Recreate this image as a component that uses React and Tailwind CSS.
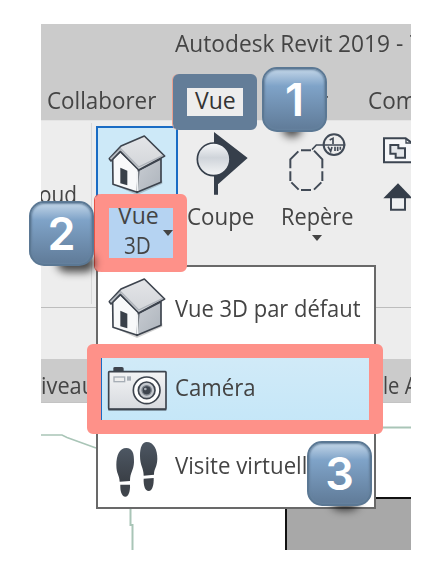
import { useLayoutEffect, useRef, useState } from "react";

// Condenses a label horizontally so that it takes exactly `w` pixels.
function Label({ children, w, className = "" }) {
  const ref = useRef(null);
  const [scale, setScale] = useState(1);
  useLayoutEffect(() => {
    setScale(w / ref.current.offsetWidth);
  }, [w]);
  return (
    <div className={`h-[30px] shrink-0 ${className}`} style={{ width: w }}>
      <span
        ref={ref}
        className="inline-block origin-left whitespace-nowrap text-[23px] leading-[30px]"
        style={{ transform: `scaleX(${scale})` }}
      >
        {children}
      </span>
    </div>
  );
}

function House() {
  return (
    <svg className="h-[62px] w-[60px] shrink-0" viewBox="230 50 180 186">
      <defs>
        <linearGradient id="roof" x1="0" y1="0" x2="0" y2="1">
          <stop offset="0" stopColor="#e4e5e8" />
          <stop offset="1" stopColor="#d2d5d9" />
        </linearGradient>
        <linearGradient id="side" x1="0" y1="0" x2="1" y2="1">
          <stop offset="0" stopColor="#c9cdd3" />
          <stop offset="1" stopColor="#adb4bc" />
        </linearGradient>
      </defs>
      <path d="M252 206 L320 236 L396 202 L396 192 L320 222Z" fill="#000" opacity=".18" />
      <path d="M247 128 L270 106 L325 158 L321 228 L248 204Z" fill="#f8f9fa" stroke="#3d444e" strokeWidth="5" strokeLinejoin="round" />
      <path d="M325 162 L392 127 V198 L320 228Z" fill="url(#side)" stroke="#3d444e" strokeWidth="5" strokeLinejoin="round" />
      <path d="M270 154 L291 163 V207 L270 201Z" fill="#394049" />
      <path d="M321 165 V224" stroke="#f0f2f4" strokeWidth="6" />
      <path d="M237 127 L272 89 L342 59 L403 119 L325 161 L270 105 L242 134Z" fill="url(#roof)" stroke="#3d444e" strokeWidth="5" strokeLinejoin="round" />
      <path d="M240 127 L271 97 L325 152 L398 117" fill="none" stroke="#adb2b9" strokeWidth="4" />
    </svg>
  );
}

function SectionIcon() {
  return (
    <svg className="h-[66px] w-[54px]" viewBox="45 30 162 198">
      <defs>
        <linearGradient id="ball" x1="0" y1="0" x2="0" y2="1">
          <stop offset="0" stopColor="#f7f8f9" />
          <stop offset=".45" stopColor="#cfd4da" />
          <stop offset="1" stopColor="#f4f5f6" />
        </linearGradient>
      </defs>
      <path d="M102 36 L203 114 L114 193 V224 H102Z" fill="#363f4b" />
      <circle cx="101" cy="118" r="49" fill="url(#ball)" stroke="#363f4b" strokeWidth="5" />
    </svg>
  );
}

function CalloutIcon() {
  return (
    <svg className="h-[60px] w-[60px]" viewBox="20 38 180 180" fill="none" stroke="#414a56">
      <path d="M54 93 L30 117 V144 M30 153 V182 M33 186 L55 208 M62 209 H92 M101 208 L123 186 M126 182 V153 M126 144 V117 L101 91 M92 90 H62" strokeWidth="6" />
      <path d="M95 88 L108 74 H195" strokeWidth="5" />
      <circle cx="161" cy="73" r="31" strokeWidth="6" />
      <path d="M148 59 L158 54 V71 M143 79 L151 93 L155 80 M164 79 V92 M172 79 V92 M180 79 V88" strokeWidth="5" />
    </svg>
  );
}

function PlanIcon() {
  return (
    <svg className="h-[27px] w-[28px]" viewBox="310 52 84 81" fill="none" stroke="#3c4551">
      <path d="M313 56 H378 L397 70 V128 H313Z" fill="#f6f7f9" strokeWidth="6" />
      <path d="M332 76 H356 V86 H376 V114 H348 V102 H332Z" fill="#e3e6ea" strokeWidth="6" />
      <path d="M379 56 V70 H397" strokeWidth="4" />
    </svg>
  );
}

function ElevationIcon() {
  return (
    <svg className="h-[30px] w-[28px]" viewBox="312 186 84 90">
      <path d="M336 230 H378 V269 H336Z" fill="#eef0f2" stroke="#3c4551" strokeWidth="6" />
      <path d="M357 190 L401 235 H313Z" fill="#343d49" />
    </svg>
  );
}

function CameraIcon() {
  return (
    <svg className="h-[46px] w-[60px] shrink-0" viewBox="232 308 180 138">
      <defs>
        <linearGradient id="body" x1="0" y1="0" x2="0" y2="1">
          <stop offset="0" stopColor="#f3f4f5" />
          <stop offset="1" stopColor="#d7dadf" />
        </linearGradient>
      </defs>
      <path d="M251 326 V314 Q251 311 256 311 H277 Q282 311 282 316 V326Z" fill="#3d444e" />
      <rect x="237" y="325" width="172" height="112" rx="2" fill="url(#body)" stroke="#3d444e" strokeWidth="5" />
      <path d="M236 439 H410" stroke="#3d444e" strokeWidth="5" />
      <rect x="253" y="341" width="32" height="14" fill="#eee" stroke="#a7aeb6" strokeWidth="4" />
      <rect x="292" y="339" width="12" height="13" fill="#a7aeb6" />
      <circle cx="351" cy="381" r="40" fill="#fff" stroke="#3d444e" strokeWidth="5" />
      <circle cx="351" cy="381" r="25" fill="#c4c8ce" stroke="#3d444e" strokeWidth="5" />
      <circle cx="351" cy="381" r="14" fill="#3d444e" stroke="#7c838c" strokeWidth="4" />
      <circle cx="347" cy="377" r="4" fill="#aab0b8" />
    </svg>
  );
}

function StepsIcon() {
  return (
    <svg className="h-[58px] w-[44px] shrink-0" viewBox="254 106 132 174">
      <defs>
        <linearGradient id="sole" x1="0" y1="0" x2="0" y2="1">
          <stop offset="0" stopColor="#4d5763" />
          <stop offset="1" stopColor="#3a3f46" />
        </linearGradient>
      </defs>
      <path d="M288 127 C306 127 312 143 311 170 C310 195 299 200 299 226 L268 228 C267 207 258 205 258 178 C258 148 268 127 288 127Z" fill="url(#sole)" />
      <path d="M270 237 H299 C300 255 295 273 285 273 C274 273 269 255 270 237Z" fill="#3f444b" />
      <path d="M349 109 C370 109 382 132 381 160 C380 187 371 188 371 207 L340 210 C340 187 329 180 329 151 C329 124 336 109 349 109Z" fill="url(#sole)" />
      <path d="M340 219 L370 217 C371 237 366 256 355 256 C344 256 339 239 340 219Z" fill="#3f444b" />
    </svg>
  );
}

function Arrow({ className }) {
  return (
    <svg className={`h-[6px] w-[10px] ${className}`} viewBox="0 0 10 6">
      <path d="M0 0 H10 L5 6Z" fill="#444" />
    </svg>
  );
}

function Badge({ n, className, shadow }) {
  return (
    <div className={`absolute size-[65px] ${className}`}>
      <div className={`absolute h-[18px] rounded-full bg-black/70 blur-[4px] ${shadow}`} />
      <div className="relative flex size-full items-center justify-center overflow-hidden rounded-[15px] border-2 border-[#5b7894] bg-linear-to-b from-[#c3d6e8] via-[#7fa3c8] via-28% to-[#607b98] font-['Inter',sans-serif] text-[45px] leading-none font-semibold text-white shadow-[inset_0_0_2px_1px_#66839f]">
        {n}
      </div>
    </div>
  );
}

export default function App() {
  return (
    <div className="relative h-[580px] w-[446px] overflow-hidden bg-white pt-[24px] pl-[41px] font-['Open_Sans','Noto_Sans',sans-serif] text-[#444]">
      <div className="flex h-[526px] w-[370px] flex-col overflow-hidden bg-white">
        <header className="h-[96px] shrink-0 bg-[#cbcbcb]">
          <div className="flex h-[60px] gap-[7px] pt-[4px] pl-[134px]">
            <Label w={228}>Autodesk Revit 2019 -</Label>
            <Label w={11}>T</Label>
          </div>
          <nav className="flex h-[30px] pt-[1px] pl-[6px]">
            <Label w={109}>Collaborer</Label>
            <div className="ml-[31px] -mt-[4px] h-[36px] w-[56px] shrink-0 bg-[#ededed] pt-[4px] pl-[8px] text-[#333]">
              <Label w={41}>Vue</Label>
            </div>
            <Label w={57} className="ml-[28px]">Gérer</Label>
            <Label w={49} className="ml-[40px]">Com</Label>
          </nav>
        </header>

        <section className="flex h-[188px] shrink-0 border-t border-b border-t-[#e4e4e4] border-b-[#bdbdbd] bg-[#ededed]">
          <div className="mt-[2px] mb-[3px] w-[51px] border-r border-[#d8d8d8] pt-[56px]">
            <Label w={38} className="-ml-[2px]">oud</Label>
          </div>
          <div className="mt-[5px] ml-[4px] h-[150px] w-[82px] border-2 border-[#1a6cc4] bg-[#cde9f8]">
            <div className="flex h-[72px] justify-center pt-[5px]"><House /></div>
            <div className="relative h-[74px] bg-[#b5d3f2] pl-[20px]">
              <Label w={41}>Vue</Label>
              <Label w={27} className="ml-[6px]">3D</Label>
              <Arrow className="absolute top-[30px] left-[65px]" />
            </div>
          </div>
          <div className="w-[96px] pt-[9px] pl-[9px]">
            <div className="pl-[8px]"><SectionIcon /></div>
            <Label w={67} className="mt-[5px]">Coupe</Label>
          </div>
          <div className="w-[96px] pt-[12px] pl-[7px]">
            <div className="pl-[6px]"><CalloutIcon /></div>
            <Label w={72} className="mt-[8px]">Repère</Label>
            <Arrow className="mt-[4px] ml-[31px]" />
          </div>
          <div className="flex flex-col gap-[18px] pt-[16px] pl-[13px]">
            <PlanIcon />
            <ElevationIcon />
          </div>
        </section>
        <div className="h-[51px] shrink-0 bg-[#ededed]" />
        <div className="flex h-[44px] shrink-0 justify-between border-b border-[#c3c3c3] bg-[#cbcbcb] pt-[11px]">
          <Label w={54}>iveau</Label>
          <Label w={43} className="-mr-[15px]">le Ar</Label>
        </div>
        <svg className="h-[147px] w-[370px] shrink-0" viewBox="41 403 370 147" fill="none">
          <path d="M41 435 H62 L67 437.500 L96 448" stroke="#a9c5b7" strokeWidth="1.500" />
          <path d="M130.500 505 V525 H132.500 V550 M380 427.500 H411" stroke="#a9c5b7" strokeWidth="2" />
          <rect x="286" y="498" width="140" height="70" fill="#a8a8a8" stroke="#111" strokeWidth="2" />
        </svg>
      </div>

      <div className="absolute top-[265px] left-[96px] flex h-[244px] w-[280px] flex-col border-2 border-[#696969] bg-white">
        <div className="flex h-[79px] items-center pl-[9px]">
          <House />
          <Label w={186} className="mt-[3px] ml-[8px]">Vue 3D par défaut</Label>
        </div>
        <div className="flex h-[86px] items-center bg-linear-to-b from-[#d3ebf8] to-[#c3e6f8] pl-[9px]">
          <CameraIcon />
          <Label w={81} className="mt-[-4px] ml-[8px]">Caméra</Label>
        </div>
        <div className="flex h-[75px] items-center pl-[17px]">
          <StepsIcon />
          <Label w={145} className="mt-[-10px] ml-[16px]">Visite virtuelle</Label>
        </div>
      </div>

      <div className="absolute top-[74px] left-[173px] h-[56px] w-[84px] rounded-[6px] border-[14px] border-[#637d98] shadow-[-1px_0_0_#e8a090]" />
      <div className="absolute top-[194px] left-[95px] h-[78px] w-[92px] rounded-[6px] border-[14px] border-[#fe9189] shadow-[-1px_0_0_#e65345]" />
      <div className="absolute top-[344px] left-[87px] h-[90px] w-[296px] rounded-[6px] border-[14px] border-[#fe9189]">
        <div className="h-full w-px bg-[#1a6cc4]" />
      </div>
      <Badge n="1" className="top-[67px] left-[262px]" shadow="left-[20px] w-[20px] bottom-[-5px]" />
      <Badge n="2" className="top-[201px] left-[29px]" shadow="left-[28px] w-[38px] bottom-[-6px]" />
      <Badge n="3" className="top-[441px] left-[307px]" shadow="left-[24px] w-[28px] bottom-[-4px]" />
    </div>
  );
}
